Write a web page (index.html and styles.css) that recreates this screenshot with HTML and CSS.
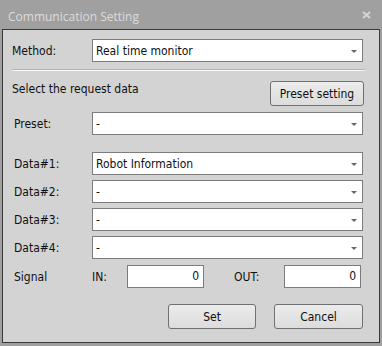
FILE: index.html
```html
<!DOCTYPE html>
<html>
<head>
<meta charset="utf-8">
<title>Communication Setting</title>
<link rel="stylesheet" href="styles.css">
</head>
<body>
<div class="window">
  <div class="titlebar">
    <span class="title">Communication Setting</span>
    <svg class="close" width="9" height="8" viewBox="0 0 9 8"><path d="M1 1L8 7M8 1L1 7" stroke="#d6d6d6" stroke-width="2"/></svg>
  </div>
  <div class="panel">
    <div class="row method-row">
      <span class="label first">Method:</span>
      <div class="combo"><span class="value">Real time monitor</span><i class="arrow"></i></div>
    </div>
    <div class="sep"></div>
    <div class="row request-row">
      <span class="request-text">Select the request data</span>
      <button class="btn preset-btn">Preset setting</button>
    </div>
    <div class="row preset-row">
      <span class="label">Preset:</span>
      <div class="combo"><span class="value">-</span><i class="arrow"></i></div>
    </div>
    <div class="row data-row data-first">
      <span class="label">Data#1:</span>
      <div class="combo"><span class="value">Robot Information</span><i class="arrow"></i></div>
    </div>
    <div class="row data-row">
      <span class="label">Data#2:</span>
      <div class="combo"><span class="value">-</span><i class="arrow"></i></div>
    </div>
    <div class="row data-row">
      <span class="label">Data#3:</span>
      <div class="combo"><span class="value">-</span><i class="arrow"></i></div>
    </div>
    <div class="row data-row">
      <span class="label">Data#4:</span>
      <div class="combo"><span class="value">-</span><i class="arrow"></i></div>
    </div>
    <div class="row signal-row">
      <span class="label">Signal</span>
      <span class="in-label">IN:</span>
      <div class="num">0</div>
      <span class="out-label">OUT:</span>
      <div class="num">0</div>
    </div>
    <div class="row action-row">
      <button class="btn set-btn">Set</button>
      <button class="btn cancel-btn">Cancel</button>
    </div>
  </div>
</div>
</body>
</html>
```

FILE: styles.css
```css
html, body {
  margin: 0;
  padding: 0;
}
body {
  background: #a0a0a0;
  width: 382px;
  height: 346px;
  overflow: hidden;
  font-family: "DejaVu Sans Condensed", "DejaVu Sans", sans-serif;
  font-size: 12px;
  color: #101010;
}
.window {
  display: flex;
  flex-direction: column;
  height: 346px;
}
.titlebar {
  height: 29px;
  display: flex;
  align-items: center;
  justify-content: space-between;
  padding: 0 11px 0 8px;
  box-sizing: border-box;
}
.title {
  font-family: "Open Sans", "Noto Sans", sans-serif;
  font-size: 12px;
  color: #dcdcdc;
  margin-top: 4px;
}
.close {
  display: block;
  margin-top: 0;
}
.panel {
  margin: 0 2px 3px 2px;
  height: 314px;
  box-sizing: border-box;
  border: 1px solid #3a3a3a;
  background: #d3d3d3;
  padding: 0 16px 0 9px;
  display: flex;
  flex-direction: column;
}
.row {
  display: flex;
  align-items: center;
}
.label {
  width: 78px;
  padding-left: 2px;
  flex: none;
}
.label.first {
  padding-left: 0;
  width: 80px;
}
.combo {
  flex: 1;
  height: 23px;
  box-sizing: border-box;
  border: 1px solid #7c7c7c;
  background: #fff;
  display: flex;
  align-items: center;
  justify-content: space-between;
  padding: 0 5px 0 3px;
}
.value {
  line-height: 14px;
}
.arrow {
  width: 0;
  height: 0;
  border-left: 3px solid transparent;
  border-right: 3px solid transparent;
  border-top: 3px solid #6a685a;
  margin-top: 1px;
}
.method-row {
  margin-top: 9px;
}
.sep {
  margin-top: 7px;
  height: 0;
  border-top: 1px solid #b4b4bc;
  border-bottom: 1px solid #f6f6f6;
  margin-right: -2px;
}
.request-row {
  margin-top: 10px;
  justify-content: space-between;
  align-items: flex-start;
}
.request-text {
  line-height: 14px;
  margin-top: 1px;
}
.btn {
  font-family: inherit;
  font-size: 12px;
  color: #101010;
  border: 1px solid #707070;
  border-radius: 3px;
  background: linear-gradient(#ececec, #dcdcdc);
  padding: 0;
  box-sizing: border-box;
}
.preset-btn {
  width: 94px;
  height: 25px;
  margin-right: -1px;
}
.preset-row {
  margin-top: 6px;
}
.data-row {
  margin-top: 5px;
}
.data-first {
  margin-top: 17px;
}
.signal-row {
  margin-top: 6px;
}
.in-label {
  width: 35px;
  flex: none;
}
.out-label {
  width: 50px;
  margin-left: 30px;
  flex: none;
}
.num {
  width: 77px;
  height: 23px;
  box-sizing: border-box;
  border: 1px solid #7c7c7c;
  background: #fff;
  text-align: right;
  padding-right: 4px;
  line-height: 21px;
}
.action-row {
  margin-top: 16px;
  justify-content: flex-end;
}
.set-btn {
  width: 88px;
  height: 25px;
  margin-right: 18px;
}
.cancel-btn {
  width: 89px;
  height: 25px;
}
```
